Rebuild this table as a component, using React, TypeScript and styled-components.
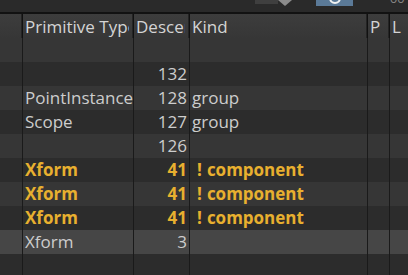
import React from "react";
import styled, { createGlobalStyle } from "styled-components";

const Global = createGlobalStyle`
  html, body { margin: 0; padding: 0; background: #2b2b2b; }
  body { font-family: "Open Sans", "Noto Sans", sans-serif; }
`;

const Root = styled.div`
  width: 408px;
  height: 275px;
  overflow: hidden;
  background: #2b2b2b;
  display: flex;
  flex-direction: column;
`;

const Toolbar = styled.div`
  height: 12px;
  flex: none;
  background: #2a2a2a;
  overflow: hidden;
  border-bottom: 2px solid #121212;
  position: relative;
`;

const ToolStrip = styled.div`
  position: absolute;
  left: 255px;
  top: -6px;
  display: flex;
  align-items: flex-start;
`;

const GrayBar = styled.div`
  width: 23px;
  height: 10px;
  background: #3f3f3f;
`;

const BlueButton = styled.div`
  margin-left: 24px;
  width: 37px;
  height: 12px;
  background: #5b7a98;
  display: flex;
  align-items: center;
  justify-content: center;
`;

const TopText = styled.div`
  margin-left: 37px;
  color: #8a8a8a;
  font-size: 12px;
  line-height: 10px;
`;

const Table = styled.div`
  display: grid;
  grid-template-columns: 23px 111px 56px 178px 22px 18px;
  grid-auto-rows: 24px;
  flex: 1;
`;

const HeadCell = styled.div<{ $last?: boolean }>`
  height: 26px;
  box-sizing: border-box;
  background: linear-gradient(#3d3d3d, #363636);
  border-right: ${(p) => (p.$last ? "none" : "1px solid #111111")};
  box-shadow: ${(p) => (p.$last ? "none" : "inset -1px 0 0 #242424")};
  border-bottom: 1px solid #232323;
  padding: 0 4px 0 2px;
`;

const HeadLabel = styled.div`
  color: #d4d4d4;
  font-size: 17px;
  line-height: 25px;
  white-space: nowrap;
  overflow: hidden;
`;

const HeadRow = styled.div`
  display: contents;
`;

const Row = styled.div`
  display: contents;
`;

const Cell = styled.div<{ $bg: string; $right?: boolean; $hot?: boolean; $last?: boolean }>`
  background: ${(p) => p.$bg};
  border-right: ${(p) => (p.$last ? "none" : "1px solid #1a1a1a")};
  color: ${(p) => (p.$hot ? "#e8b02f" : "#cdcdcd")};
  font-weight: ${(p) => (p.$hot ? 700 : 400)};
  font-size: 17px;
  line-height: 24px;
  white-space: nowrap;
  overflow: hidden;
  text-align: ${(p) => (p.$right ? "right" : "left")};
  padding: ${(p) => (p.$right ? "0 2px 0 0" : "0 0 0 2px")};
`;

const Bang = styled.span`
  margin-left: 5px;
  margin-right: 5px;
`;

type RowData = { type: string; desc: string; kind: string; hot?: boolean; sel?: boolean };

const rows: RowData[] = [
  { type: "", desc: "", kind: "" },
  { type: "", desc: "132", kind: "" },
  { type: "PointInstance", desc: "128", kind: "group" },
  { type: "Scope", desc: "127", kind: "group" },
  { type: "", desc: "126", kind: "" },
  { type: "Xform", desc: "41", kind: "component", hot: true },
  { type: "Xform", desc: "41", kind: "component", hot: true },
  { type: "Xform", desc: "41", kind: "component", hot: true },
  { type: "Xform", desc: "3", kind: "", sel: true },
  { type: "", desc: "", kind: "" },
];

const headers = ["", "Primitive Type", "Descendants", "Kind", "P", "L"];

export default function App() {
  return (
    <Root>
      <Global />
      <Toolbar>
        <ToolStrip>
          <GrayBar />
          <svg width="14" height="12" viewBox="0 0 14 12">
            <polygon points="0,6 14,6 7,12" fill="#8c8c8c" />
            <rect x="4" y="0" width="6" height="7" fill="#8c8c8c" />
          </svg>
          <BlueButton>
            <svg width="14" height="14" viewBox="0 0 14 14">
              <circle cx="7" cy="5" r="5" fill="none" stroke="#f2f2f2" strokeWidth="2" />
            </svg>
          </BlueButton>
          <TopText>oo</TopText>
        </ToolStrip>
      </Toolbar>
      <Table>
        <HeadRow>
          {headers.map((h, i) => (
            <HeadCell key={i} $last={i === headers.length - 1}>
              <HeadLabel>{h}</HeadLabel>
            </HeadCell>
          ))}
        </HeadRow>
        {rows.map((r, i) => {
          const bg = r.sel ? "#464646" : i % 2 === 0 ? "#363636" : "#2c2c2c";
          return (
            <Row key={i}>
              <Cell $bg={bg} />
              <Cell $bg={bg} $hot={r.hot}>{r.type}</Cell>
              <Cell $bg={bg} $hot={r.hot} $right>{r.desc}</Cell>
              <Cell $bg={bg} $hot={r.hot}>
                {r.hot ? <Bang>!</Bang> : null}
                {r.kind}
              </Cell>
              <Cell $bg={bg} />
              <Cell $bg={bg} $last />
            </Row>
          );
        })}
      </Table>
    </Root>
  );
}
